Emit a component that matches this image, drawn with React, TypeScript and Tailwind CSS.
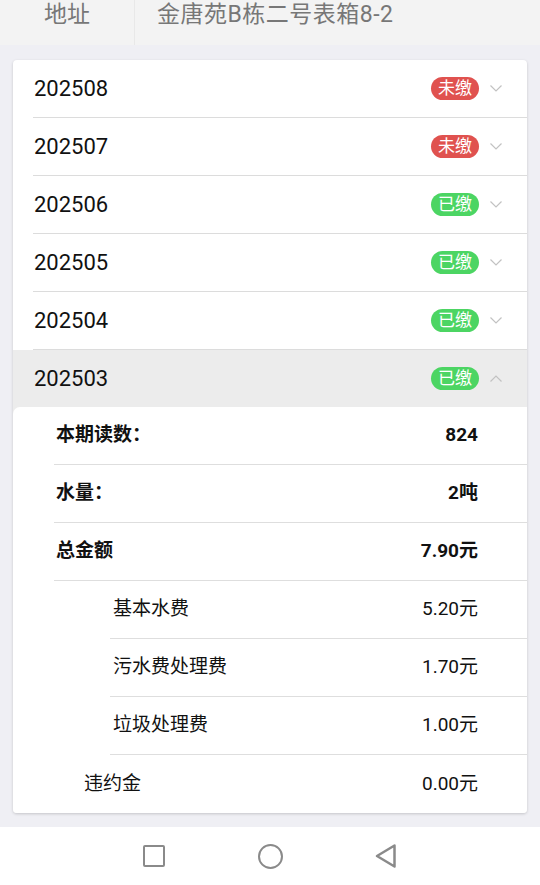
const font = { fontFamily: "Roboto, 'Noto Sans CJK SC', sans-serif" }

const months = [
  { id: '202508', paid: false },
  { id: '202507', paid: false },
  { id: '202506', paid: true },
  { id: '202505', paid: true },
  { id: '202504', paid: true },
]

function Badge({ paid }: { paid: boolean }) {
  return (
    <span
      className={`flex h-[23px] w-[48px] items-center justify-center rounded-full text-[17px] leading-none text-white ${
        paid ? 'bg-[#4cd563]' : 'bg-[#e0524f]'
      }`}
    >
      {paid ? '已缴' : '未缴'}
    </span>
  )
}

function Chevron({ up }: { up?: boolean }) {
  return (
    <svg width="12" height="7" viewBox="0 0 12 7" className="ml-[11px]">
      <polyline
        points={up ? '0.5,6.5 6,1 11.5,6.5' : '0.5,0.5 6,6 11.5,0.5'}
        fill="none"
        stroke="#c2c2c2"
        strokeWidth="1.2"
      />
    </svg>
  )
}

function DetailRow({
  label,
  value,
  indent,
  bold,
  last,
}: {
  label: string
  value: string
  indent: string
  bold?: boolean
  last?: boolean
}) {
  return (
    <div
      className={`flex h-[58px] items-center justify-between pr-[49px] ${indent} ${
        last ? '' : 'border-b border-[#dedede]'
      } ${bold ? 'font-bold' : ''}`}
    >
      <span className="text-[19px] text-[#111]">{label}</span>
      <span className="text-[19px] text-[#111]">{value}</span>
    </div>
  )
}

export default function App() {
  return (
    <div className="flex h-[885px] w-[540px] flex-col bg-[#efeff4]" style={font}>
      {/* Header */}
      <div className="flex h-[45px] bg-[#f3f3f3] text-[23px] text-[#777]">
        <div className="flex h-full w-[135px] items-start justify-center border-r border-[#e8e8e8]">
          <span className="leading-[29px]">地址</span>
        </div>
        <div className="flex items-start pl-[22px]">
          <span className="leading-[29px] tracking-[0.5px]">金唐苑B栋二号表箱8-2</span>
        </div>
      </div>

      {/* Card */}
      <div className="flex-1 px-[13px] pt-[15px]">
        <div className="overflow-hidden rounded-[4px] bg-white shadow-[0_1px_3px_rgba(0,0,0,0.18)]">
          {months.map((m) => (
            <div key={m.id} className="ml-[20px] flex h-[58px] items-center justify-between border-b border-[#dcdcdc] pl-[1px] pr-[25px]">
              <span className="text-[22px] text-[#111]">{m.id}</span>
              <div className="flex items-center">
                <Badge paid={m.paid} />
                <Chevron />
              </div>
            </div>
          ))}

          <div className="bg-[#ececec]">
            <div className="flex h-[57px] items-center justify-between pl-[21px] pr-[25px]">
              <span className="text-[22px] text-[#111]">202503</span>
              <div className="flex items-center">
                <Badge paid />
                <Chevron up />
              </div>
            </div>
            <div className="rounded-tl-[7px] bg-white">
              <DetailRow label="本期读数：" value="824" indent="ml-[41px] pl-[2px]" bold />
              <DetailRow label="水量：" value="2吨" indent="ml-[41px] pl-[2px]" bold />
              <DetailRow label="总金额" value="7.90元" indent="ml-[41px] pl-[2px]" bold />
              <DetailRow label="基本水费" value="5.20元" indent="ml-[97px] pl-[3px]" />
              <DetailRow label="污水费处理费" value="1.70元" indent="ml-[97px] pl-[3px]" />
              <DetailRow label="垃圾处理费" value="1.00元" indent="ml-[97px] pl-[3px]" />
              <DetailRow label="违约金" value="0.00元" indent="ml-[71px]" last />
            </div>
          </div>
        </div>
      </div>

      {/* Nav bar */}
      <div className="flex h-[58px] items-center bg-white">
        <div className="flex w-full items-center">
          <div className="ml-[143px] h-[22px] w-[22px] rounded-[2px] border-[2.5px] border-[#8a8a8a]" />
          <div className="ml-[93px] h-[25px] w-[25px] rounded-full border-[2.5px] border-[#8a8a8a]" />
          <svg width="24" height="26" viewBox="0 0 24 26" className="ml-[91px]">
            <path d="M20.5 2.5 L3 13 L20.5 23.5 Z" fill="none" stroke="#8a8a8a" strokeWidth="2.5" strokeLinejoin="round" />
          </svg>
        </div>
      </div>
    </div>
  )
}
